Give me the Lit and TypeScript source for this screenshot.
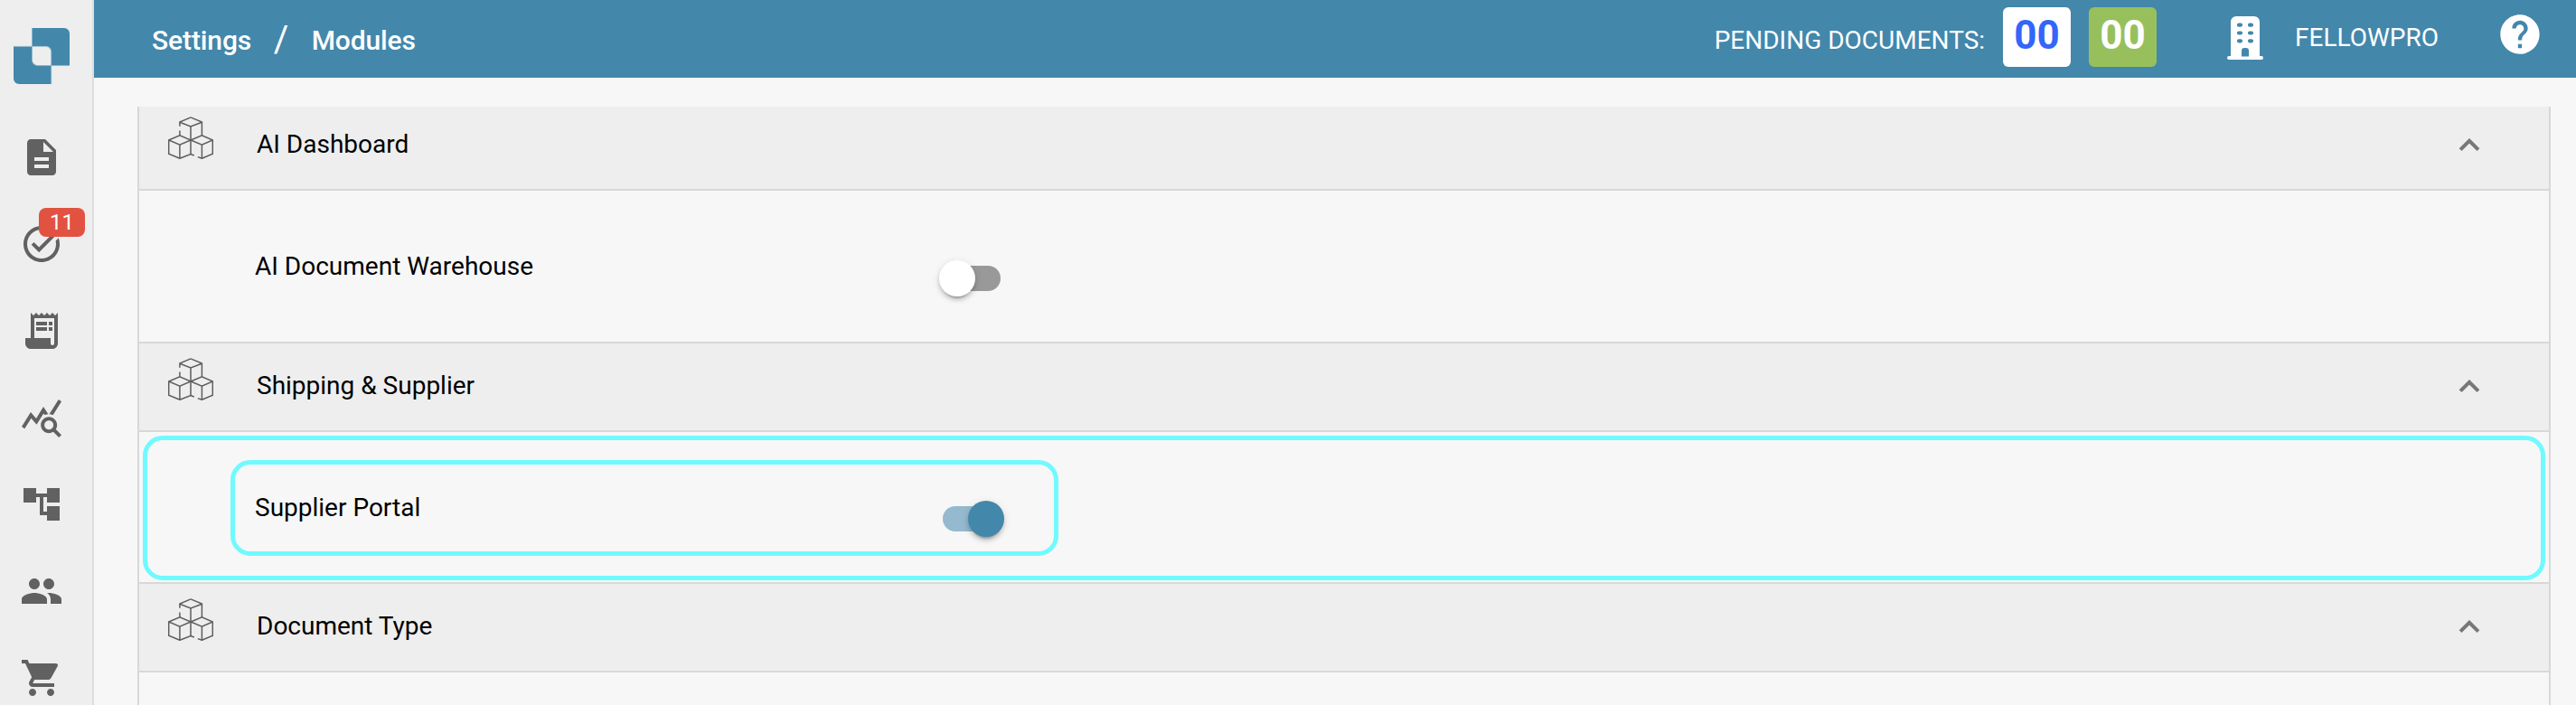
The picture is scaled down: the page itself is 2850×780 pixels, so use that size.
import { LitElement, html, css, svg } from "lit";
import { customElement, property } from "lit/decorators.js";
import { classMap } from "lit/directives/class-map.js";

const navIcons = [
  { name: "documents", d: "M14 2H6c-1.1 0-1.99.9-1.99 2L4 20c0 1.1.89 2 1.99 2H18c1.1 0 2-.9 2-2V8l-6-6zm2 16H8v-2h8v2zm0-4H8v-2h8v2zm-3-5V3.5L18.5 9H13z" },
  { name: "tasks", badge: "11", d: "M22 5.18 10.59 16.6l-4.24-4.24 1.41-1.41 2.83 2.83 10-10L22 5.18zm-2.21 5.04c.13.57.21 1.17.21 1.78 0 4.42-3.58 8-8 8s-8-3.58-8-8 3.58-8 8-8c1.58 0 3.04.46 4.28 1.25l1.44-1.44C16.1 2.67 14.13 2 12 2 6.48 2 2 6.48 2 12s4.48 10 10 10 10-4.48 10-10c0-1.19-.22-2.33-.6-3.39l-1.61 1.61z" },
  { name: "receipts", d: "M19.5 3.5 18 2l-1.5 1.5L15 2l-1.5 1.5L12 2l-1.5 1.5L9 2 7.5 3.5 6 2v14H3v3c0 1.66 1.34 3 3 3h12c1.66 0 3-1.34 3-3V2l-1.5 1.5zM19 19c0 .55-.45 1-1 1s-1-.45-1-1v-3H8V5h11v14zM9 7h6v2H9zM16 7h2v2h-2zM9 10h6v2H9zM16 10h2v2h-2z" },
  { name: "statistics", d: "M19.88 18.47c.44-.7.7-1.51.7-2.39 0-2.49-2.01-4.5-4.5-4.5s-4.5 2.01-4.5 4.5 2.01 4.5 4.49 4.5c.88 0 1.7-.26 2.39-.7L21.58 23 23 21.58l-3.12-3.11zm-3.8.11c-1.38 0-2.5-1.12-2.5-2.5s1.12-2.5 2.5-2.5 2.5 1.12 2.5 2.5-1.12 2.5-2.5 2.5zm-.36-8.5c-.74.02-1.45.18-2.1.45l-.55-.83-3.8 6.18-3.01-3.52-3.63 5.81L1 17l5-8 3 3.5L13 6l2.72 4.08zm2.59.5c-.64-.28-1.33-.45-2.05-.49L21.38 2 23 3.18l-4.69 7.4z" },
  { name: "workflow", d: "M22 11V3h-7v3H9V3H2v8h7V8h2v10h4v3h7v-8h-7v3h-2V8h2v3z" },
  { name: "users", d: "M16 11c1.66 0 2.99-1.34 2.99-3S17.66 5 16 5c-1.66 0-3 1.34-3 3s1.34 3 3 3zm-8 0c1.66 0 2.99-1.34 2.99-3S9.66 5 8 5C6.34 5 5 6.34 5 8s1.34 3 3 3zm0 2c-2.33 0-7 1.17-7 3.5V19h14v-2.5c0-2.33-4.67-3.5-7-3.5zm8 0c-.29 0-.62.02-.97.05 1.16.84 1.97 1.97 1.97 3.45V19h6v-2.5c0-2.33-4.67-3.5-7-3.5z" },
  { name: "cart", d: "M7 18c-1.1 0-1.99.9-1.99 2S5.9 22 7 22s2-.9 2-2-.9-2-2-2zM1 2v2h2l3.6 7.59-1.35 2.45c-.16.28-.25.61-.25.96 0 1.1.9 2 2 2h12v-2H7.42c-.14 0-.25-.11-.25-.25l.03-.12.9-1.63h7.45c.75 0 1.41-.41 1.75-1.03l3.58-6.49c.08-.14.12-.31.12-.48 0-.55-.45-1-1-1H5.21l-.94-2H1zm16 16c-1.1 0-1.99.9-1.99 2s.89 2 1.99 2 2-.9 2-2-.9-2-2-2z" },
];

const cubes = svg`
  <g fill="none" stroke="#5e5e5e" stroke-width="1.5">
    <path d="M25 .9 37.4 6v14.900M12.9 10.800V6L25 .9M12.900 6.200 25 11l12.400-4.800M25 11v31M12.900 15.500v5.400"/>
    <path d="M.7 26 12.900 20.900 25 26 12.900 31.200zM.7 26v15.300L12.900 46.300 25 41.600l3.800 1.400M12.900 31.200v15"/>
    <path d="M25 26l12.400-5.100L49.300 26 37.400 31.200zM49.300 26v15.300L37.400 46.300 32.800 44.600M37.400 31.200v15"/>
  </g>`;

@customElement("side-nav")
class SideNav extends LitElement {
  static styles = css`
    :host { display: flex; flex-direction: column; flex: none; box-sizing: border-box; width: 104px; height: 780px;
      padding-top: 31px; background: #eee; border-right: 2px solid #ddd; overflow: hidden; }
    .logo { display: block; width: 62px; height: 62px; margin-left: 15px; }
    .list { display: flex; flex-direction: column; gap: 48px; padding: 57px 0 0 22px; }
    .item { position: relative; width: 48px; height: 48px; }
    .icon { display: block; width: 48px; height: 48px; fill: #616161; }
    .badge { position: absolute; left: 21px; top: -16px; width: 51px; height: 32px; border-radius: 8px;
      background: #e25241; color: #fff; font-size: 24px; line-height: 32px; text-align: center; }
  `;
  render() {
    return html`
      <svg class="logo" viewBox="0 0 62 62">
        <path fill="#4387ab" d="M20.500 0H56a6 6 0 0 1 6 6v35.500H41.700V26a6 6 0 0 0-6-6H20.500zM0 20.500h20.500V35.500a6 6 0 0 0 6 6H41.700V62H6a6 6 0 0 1-6-6z"/>
        <path fill="none" stroke="#8fb5cb" stroke-width=".8" d="M20.500 0V35.500a6 6 0 0 0 6 6H62M0 20.400H35.700a6 6 0 0 1 6 6V62"/>
      </svg>
      <nav class="list">
        ${navIcons.map((i) => html`<div class="item" title=${i.name}>
          <svg class="icon" viewBox="0 0 24 24"><path d=${i.d}/></svg>
          ${i.badge ? html`<span class="badge">${i.badge}</span>` : null}
        </div>`)}
      </nav>`;
  }
}

@customElement("top-bar")
class TopBar extends LitElement {
  static styles = css`
    :host { display: flex; box-sizing: border-box; height: 86px; padding: 0 36px 0 64px; background: #4387ab; color: #fff;
      align-items: flex-start; font-size: 28px; white-space: nowrap; }
    .crumbs { display: flex; align-items: center; height: 89px; font-size: 30px; font-weight: 500; letter-spacing: -.1px; }
    .slash { margin: 0 25.500px 0 24.500px; font-size: 40px; font-weight: 400; line-height: 87px; height: 90px; }
    .spacer { flex: 1; }
    .pending { line-height: 89px; margin-right: 20px; }
    .count { box-sizing: border-box; width: 75px; height: 66px; margin: 8px 20px 0 0; border-radius: 6px; background: #fff;
      color: #3366fa; font-size: 44px; font-weight: 700; line-height: 62px; text-align: center; }
    .done { background: #97c05c; color: #fff; margin-right: 78px; }
    .building { width: 40px; height: 48px; margin: 18px 35px 0 0; fill: #fff; }
    .company { line-height: 83px; margin-right: 64px; }
    .help { width: 52px; height: 52px; margin-top: 12px; fill: #fff; }
  `;
  render() {
    return html`
      <div class="crumbs"><span>Settings</span><span class="slash">/</span><span>Modules</span></div>
      <div class="spacer"></div>
      <span class="pending">PENDING DOCUMENTS:</span>
      <span class="count">00</span>
      <span class="count done">00</span>
      <svg class="building" viewBox="0 0 40 48">
        <path fill-rule="evenodd" d="M10 0H30a6 6 0 0 1 6 6V44h2a2 2 0 0 1 0 4H2a2 2 0 0 1 0-4h2V6a6 6 0 0 1 6-6z
          M13 7.600a2 2 0 0 0 0 4.200h2a2 2 0 0 0 0-4.200zM25 7.600a2 2 0 0 0 0 4.200h2a2 2 0 0 0 0-4.200z
          M13 16.400a2 2 0 0 0 0 4.200h2a2 2 0 0 0 0-4.200zM25 16.400a2 2 0 0 0 0 4.200h2a2 2 0 0 0 0-4.200z
          M13 25.200a2 2 0 0 0 0 4.200h2a2 2 0 0 0 0-4.200zM25 25.200a2 2 0 0 0 0 4.200h2a2 2 0 0 0 0-4.200z
          M16 44.500h8V38a3 3 0 0 0-3-3h-2a3 3 0 0 0-3 3z"/>
      </svg>
      <span class="company">FELLOWPRO</span>
      <svg class="help" viewBox="0 0 24 24"><path d="M12 2C6.480 2 2 6.480 2 12s4.480 10 10 10 10-4.480 10-10S17.520 2 12 2zm1 17h-2v-2h2v2zm2.070-7.750l-.9.920C13.450 12.900 13 13.500 13 15h-2v-.5c0-1.100.450-2.100 1.170-2.830l1.240-1.260c.370-.360.590-.860.590-1.410 0-1.100-.9-2-2-2s-2 .9-2 2H8c0-2.210 1.790-4 4-4s4 1.790 4 4c0 .880-.360 1.680-.930 2.250z"/></svg>`;
  }
}

@customElement("slide-toggle")
class SlideToggle extends LitElement {
  @property({ type: Boolean }) checked = false;
  static styles = css`
    :host { display: flex; align-items: center; width: 72px; height: 40px; }
    .track { display: flex; align-items: center; width: 64px; height: 28px; margin: 0 4px; border-radius: 14px; background: #999; }
    .thumb { flex: none; width: 40px; height: 40px; margin-left: -4px; border-radius: 50%; background: #fff;
      box-shadow: 0 6px 2px -4px rgba(0,0,0,.2), 0 4px 4px 0 rgba(0,0,0,.14), 0 2px 10px 0 rgba(0,0,0,.12); }
    .on { background: #95b9ce; }
    .on .thumb { margin-left: 28px; background: #4387ab; }
  `;
  render() {
    return html`<div class=${classMap({ track: true, on: this.checked })}><div class="thumb"></div></div>`;
  }
}

@customElement("module-section")
class ModuleSection extends LitElement {
  @property() heading = "";
  @property() module = "";
  @property({ type: Boolean }) enabled = false;
  @property({ type: Boolean }) highlighted = false;
  static styles = css`
    :host { display: block; color: #000; font-size: 28px; }
    .head { display: flex; box-sizing: border-box; height: 98px; padding: 0 76px 0 32px; background: #eee; border-bottom: 2px solid #d8d8d8; }
    .cubes { width: 50px; height: 47px; margin-top: 16px; }
    .title { flex: 1; margin-left: 48px; line-height: 94px; }
    .chevron { width: 24px; height: 16px; margin-top: 40px; }
    .body { position: relative; display: flex; box-sizing: border-box; height: 168.500px; padding-left: 128px; border-bottom: 2px solid #d8d8d8; }
    .label { width: 757px; line-height: 167px; }
    .toggle { margin-top: 76.600px; }
    .outline { position: absolute; box-sizing: border-box; border: 5px solid #70faff; border-radius: 22px; }
    .wide { left: 4px; right: 4px; top: 4px; height: 160px; }
    .tight { left: 101px; width: 916px; top: 31px; height: 106px; }
  `;
  render() {
    return html`
      <div class="head">
        <svg class="cubes" viewBox="0 0 50 47">${cubes}</svg>
        <span class="title">${this.heading}</span>
        <svg class="chevron" viewBox="0 0 24 16"><path d="M2.100 12.700 12 2.800l9.900 9.900" fill="none" stroke="#777" stroke-width="4"/></svg>
      </div>
      <div class="body">
        <span class="label">${this.module}</span>
        ${this.module ? html`<slide-toggle class="toggle" ?checked=${this.enabled}></slide-toggle>` : null}
        ${this.highlighted ? html`<div class="outline wide"></div><div class="outline tight"></div>` : null}
      </div>`;
  }
}

@customElement("app-root")
class AppRoot extends LitElement {
  static styles = css`
    :host { display: flex; width: 2850px; height: 780px; overflow: hidden; background: #f7f7f7; font-family: Roboto, sans-serif; }
    .main { flex: 1; display: flex; flex-direction: column; min-width: 0; }
    .panel { flex: 1; min-height: 0; margin: 32px 28px 0 48px; border: solid #d8d8d8; border-width: 0 2px; overflow: hidden; }
    .scrolled { margin-top: -5px; }
  `;
  render() {
    return html`
      <side-nav></side-nav>
      <div class="main">
        <top-bar></top-bar>
        <div class="panel"><div class="scrolled">
          <module-section heading="AI Dashboard" module="AI Document Warehouse"></module-section>
          <module-section heading="Shipping &amp; Supplier" module="Supplier Portal" enabled highlighted></module-section>
          <module-section heading="Document Type"></module-section>
        </div></div>
      </div>`;
  }
}
